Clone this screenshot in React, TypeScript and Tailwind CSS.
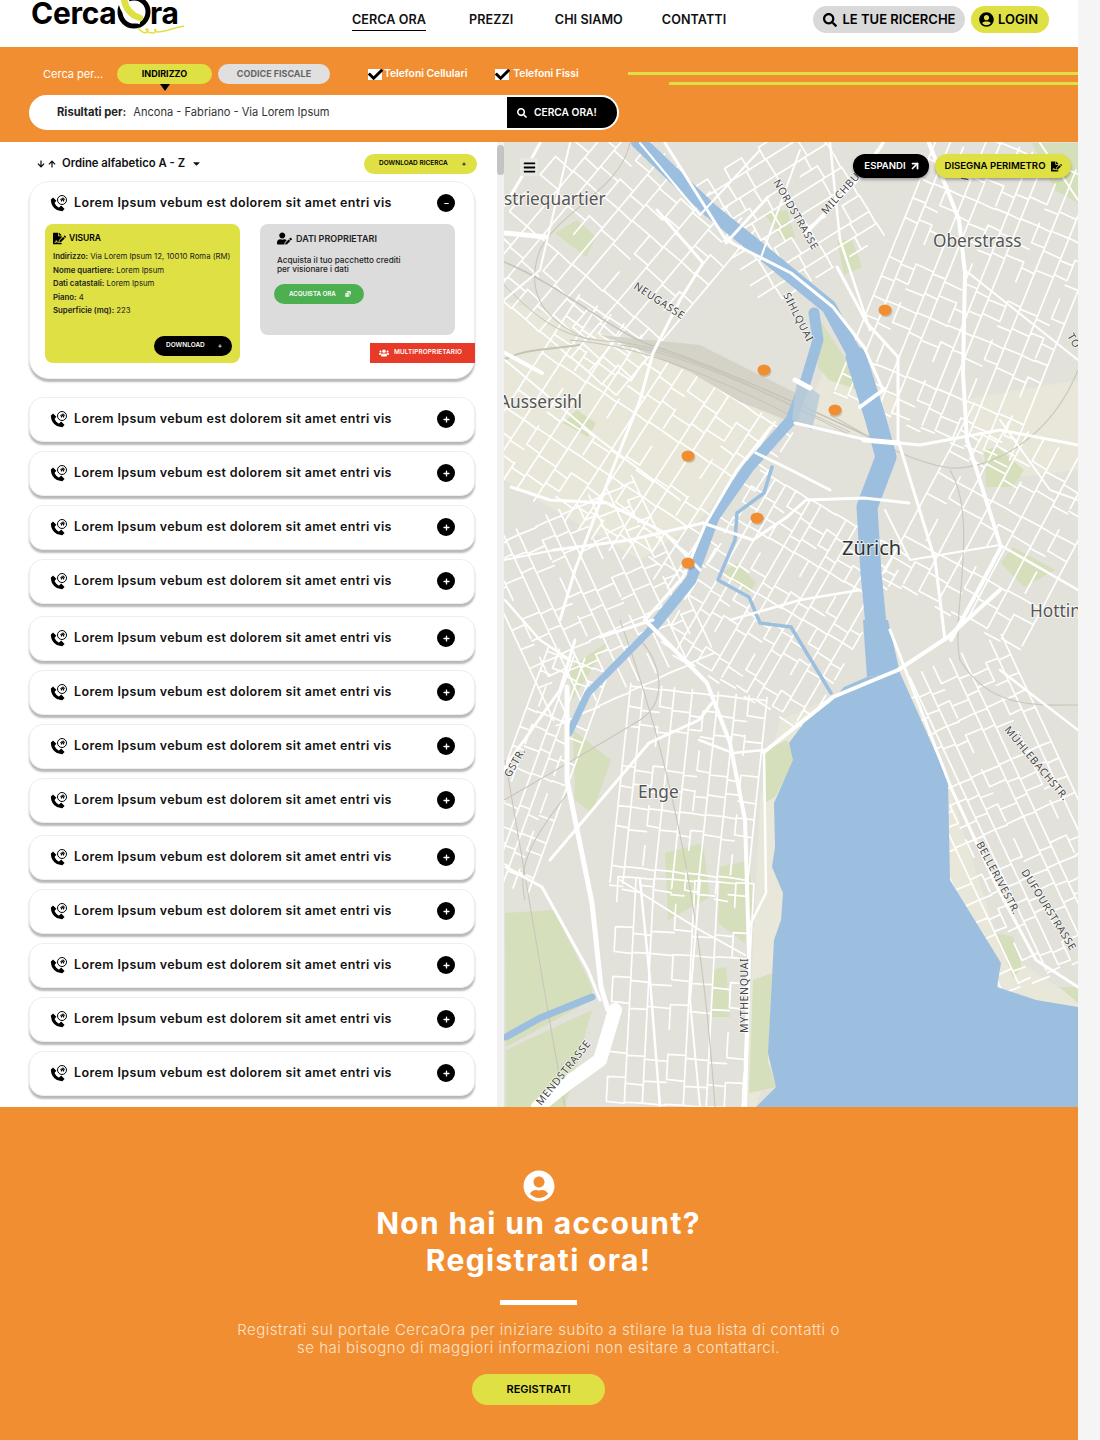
import React from 'react';
import {
  FaArrowDown, FaArrowUp, FaBars, FaCaretDown, FaCheck, FaCoins, FaFileSignature, FaHome, FaMinus,
  FaPlus, FaSearch, FaUserCircle, FaUserEdit, FaUsers,
} from 'react-icons/fa';
import { ArrowUpRight } from 'lucide-react';

const font = { fontFamily: 'Inter, "Liberation Sans", sans-serif' };

const Logo = () => (
  <div className="relative h-[47px] w-[160px] shrink-0 overflow-hidden">
    <span className="absolute left-0 top-[-5px] text-[30px] leading-[36px] font-bold tracking-[-0.01em] text-black">Cerca</span>
    <svg className="absolute left-[85px] top-0" width="70" height="36" viewBox="0 0 70 36">
      <circle cx="18" cy="12" r="14" fill="none" stroke="#000" strokeWidth="5" />
      <path d="M7 -3 C8 8 14 16 25 19" fill="none" stroke="#fff" strokeWidth="11" />
      <path d="M8 -2 C9 8 15 15 24 18" fill="none" stroke="#dfe044" strokeWidth="6.5" strokeLinecap="round" />
      <path d="M22 28 C27 34 32 34 32 30 C31 27 28 30 32 32 C38 34 40 33 40 30 C39 28 37 31 41 32 C50 32 56 28 68 26" fill="none" stroke="#dfe044" strokeWidth="1.4" />
    </svg>
    <span className="absolute left-[119px] top-[-5px] text-[30px] leading-[36px] font-bold tracking-[-0.01em] text-black">ra</span>
  </div>
);

const PhoneHome = () => (
  <span className="relative block h-[17px] w-[17px] shrink-0">
    <svg className="absolute left-0 top-[2px]" width="15" height="15" viewBox="0 0 15 15">
      <path d="M2.6 2.6 C2 8 7 13.4 12.4 12.4" fill="none" stroke="#000" strokeWidth="3" />
      <path d="M0.6 3 L3 0.4 L6.4 3.8 L4 6.4 Z M8.6 11 L11.2 8.6 L14.6 12 L12 14.6 Z" fill="#000" />
    </svg>
    <span className="absolute right-0 top-0 flex h-[10px] w-[10px] items-center justify-center rounded-full border-[1.5px] border-black bg-white">
      <FaHome className="text-[5px] text-black" />
    </span>
  </span>
);

const RowTitle = () => (
  <span className="text-[12.5px] font-semibold tracking-[0.03em] text-[#111]">Lorem Ipsum vebum est dolorem sit amet entri vis</span>
);

const ResultRow = () => (
  <div className="flex h-[45px] items-center justify-between rounded-[14px] border border-[#eeeeee] bg-white pb-[1px] pl-[20px] pr-[19px] shadow-[0_3px_2px_rgba(0,0,0,0.28)]">
    <div className="flex items-center gap-[7px]">
      <PhoneHome />
      <RowTitle />
    </div>
    <span className="flex h-[18px] w-[18px] items-center justify-center rounded-full bg-black">
      <FaPlus className="text-[7px] text-white" />
    </span>
  </div>
);

const OpenCard = () => (
  <div className="relative h-[198px] rounded-[20px] border border-[#eeeeee] bg-white shadow-[0_3px_2px_rgba(0,0,0,0.28)]">
    <div className="flex h-[42px] items-center justify-between pl-[20px] pr-[19px]">
      <div className="flex items-center gap-[7px]">
        <PhoneHome />
        <RowTitle />
      </div>
      <span className="flex h-[18px] w-[18px] items-center justify-center rounded-full bg-black">
        <FaMinus className="text-[5px] text-white" />
      </span>
    </div>
    <div className="flex items-start gap-[20px] pl-[15px]">
      <div className="relative h-[139px] w-[195px] rounded-[8px] bg-[#dfe044] px-[8px] pt-[8px] text-[#222]">
        <div className="flex items-center gap-[3px]">
          <FaFileSignature className="text-[13px] text-black" />
          <span className="text-[8.5px] font-semibold text-black">VISURA</span>
        </div>
        <div className="mt-[7px] flex flex-col gap-[4.5px] text-[7.8px] leading-[9px]">
          <p><b className="font-semibold">Indirizzo:</b> Via Lorem Ipsum 12, 10010 Roma (RM)</p>
          <p><b className="font-semibold">Nome quartiere:</b> Lorem Ipsum</p>
          <p><b className="font-semibold">Dati catastali:</b> Lorem Ipsum</p>
          <p><b className="font-semibold">Piano:</b> 4</p>
          <p><b className="font-semibold">Superficie (mq):</b> 223</p>
        </div>
        <div className="absolute bottom-[7px] right-[8px] flex h-[20px] w-[78px] items-center justify-between rounded-full bg-black pl-[12px] pr-[10px] text-white">
          <span className="text-[6.5px] font-semibold">DOWNLOAD</span>
          <FaPlus className="text-[4px]" />
        </div>
      </div>
      <div className="h-[111px] w-[195px] rounded-[8px] bg-[#dcdcdc] pl-[17px] pt-[7px] text-[#222]">
        <div className="flex items-center gap-[4px]">
          <FaUserEdit className="text-[15px] text-black" />
          <span className="text-[9px] font-semibold">DATI PROPRIETARI</span>
        </div>
        <p className="mt-[10px] text-[8.2px] leading-[9px] font-medium">Acquista il tuo pacchetto crediti<br />per visionare i dati</p>
        <div className="-ml-[3px] mt-[10px] flex h-[20px] w-[90px] items-center justify-between rounded-full bg-[#4caf50] pl-[15px] pr-[13px] text-white">
          <span className="text-[6.2px] font-semibold">ACQUISTA ORA</span>
          <FaCoins className="text-[6px]" />
        </div>
      </div>
    </div>
    <div className="absolute bottom-[15px] right-[-1px] flex h-[20px] w-[105px] items-center gap-[5px] bg-[#e83a28] pl-[9px] text-white">
      <FaUsers className="text-[10px]" />
      <span className="text-[6.4px] font-semibold tracking-[0.02em]">MULTIPROPRIETARIO</span>
    </div>
  </div>
);

const districts = [
  { x: 505, y: 143, w: 210, h: 230, a: 40, sx: 20, sy: 24 },
  { x: 505, y: 350, w: 260, h: 200, a: 33, sx: 18, sy: 22 },
  { x: 505, y: 500, w: 190, h: 190, a: -25, sx: 16, sy: 21 },
  { x: 710, y: 143, w: 150, h: 150, a: 58, sx: 16, sy: 20 },
  { x: 880, y: 143, w: 200, h: 300, a: 22, sx: 16, sy: 21 },
  { x: 920, y: 430, w: 160, h: 200, a: 28, sx: 19, sy: 24 },
  { x: 700, y: 500, w: 170, h: 200, a: 30, sx: 14, sy: 18 },
  { x: 620, y: 690, w: 140, h: 200, a: 6, sx: 15, sy: 20 },
  { x: 505, y: 650, w: 70, h: 240, a: 20, sx: 13, sy: 20 },
  { x: 610, y: 880, w: 140, h: 230, a: 3, sx: 20, sy: 25 },
  { x: 930, y: 650, w: 150, h: 330, a: -25, sx: 15, sy: 19 },
];

// street grid per district, jittered and with some segments left out so blocks are not too regular
const gridPath = (d: (typeof districts)[number], seed: number) => {
  let path = '';
  const nx = Math.floor(d.w / d.sx);
  const ny = Math.floor(d.h / d.sy);
  const colX = (i: number) => d.x + i * d.sx + ((i * 13 + seed) % 5) - 2;
  for (let i = 0; i <= nx; i++) {
    for (let j = 0; j < ny; j++) {
      if ((i * 7 + j * 3 + seed) % 6 === 0) continue;
      path += `M${colX(i)} ${d.y + j * d.sy}V${d.y + (j + 1) * d.sy}`;
    }
  }
  for (let j = 0; j <= ny; j++) {
    for (let i = 0; i < nx; i++) {
      if ((i * 5 + j * 11 + seed) % 5 === 0) continue;
      const yy = d.y + j * d.sy + ((i * j + seed) % 3) * 3;
      path += `M${colX(i)} ${yy}L${colX(i + 1)} ${yy + ((i + j) % 2)}`;
    }
  }
  return path;
};

const parks = [
  '555,233 577,220 596,237 586,257', '563,423 577,410 596,423 588,437', '764,213 787,210 795,237 783,240',
  '837,240 852,240 862,267 844,275', '818,317 844,357 858,390 829,380 818,367', '984,450 997,447 1024,470 1013,487 986,487',
  '1001,563 1013,547 1055,570 1024,587', '722,573 737,563 756,583 749,593', '1032,143 1078,143 1078,203 1055,190',
  '573,730 611,760 592,813 575,800', '665,853 703,843 710,897 668,920', '720,867 749,860 753,907 745,943 718,923',
  '764,750 787,740 795,760 775,797 764,803', '505,913 554,910 592,987 592,1000 506,1047', '506,1050 592,1010 565,1107 506,1107',
  '753,980 772,973 768,1063 776,1087 749,1093', '712,970 726,967 730,1017 712,1017', '996,933 1013,937 1022,967 1013,978',
  '1059,987 1078,987 1078,1003', '570,668 610,640 585,680 572,700',
];

const beige = [
  '504,300 660,350 780,420 700,520 640,560 504,480',
  '890,630 950,790 1001,950 1078,1000 1078,1020 1000,990 950,880 900,673',
  '780,720 850,690 900,673 900,700 800,800 790,1000 756,1107 745,1107 760,800',
  '830,360 900,400 880,440 800,420', '960,400 1078,380 1078,470 990,480',
];

const lake = '900,673 948,780 950,880 1001,963 997,987 1036,1000 1078,1007 1078,1107 756,1107 776,1087 768,1053 774,940 781,920 783,893 772,867 775,847 774,803 793,760 789,743 804,723 833,700 844,687 867,677';

const mainRoads: [string, number][] = [
  ['703,263 680,300 653,353 640,400 611,473 575,570 560,620', 3],
  ['726,243 768,197', 3], ['806,233 860,177 883,143', 3.5],
  ['665,143 726,240 791,273 833,307 864,347 883,390', 3],
  ['883,390 860,407', 4], ['929,143 959,220 965,273 963,373 967,440 986,500 1001,547 982,583 951,640', 4],
  ['837,267 867,323 898,357 898,440 935,560 945,640', 3], ['795,380 810,388', 5], ['795,423 867,440 920,445 1000,430 1078,445', 3],
  ['864,440 898,443', 5], ['756,453 791,470 830,490', 3], ['703,523 753,540 787,517 806,500 864,498 909,503', 3],
  ['511,487 550,500 607,503 665,533 700,570', 3], ['554,550 630,540 703,523', 3], ['504,560 554,550', 2],
  ['645,620 683,577 706,523 737,470 771,427', 3], ['645,620 707,683 730,743 745,820 749,953 745,1107', 4],
  ['764,750 766,893 749,927', 2.5], ['567,687 567,780 592,903 601,987 608,1010', 5], ['615,1010 600,1060 565,1085 538,1107', 14],
  ['550,860 649,743 699,720 712,703', 3], ['764,752 833,697 898,670 948,637 1000,590', 4],
  ['890,630 952,790 997,887 1036,960 1078,987', 3], ['699,740 733,753 764,750', 2.5], ['506,867 542,887 588,970 600,1000', 3],
  ['505,233 546,237', 5], ['505,353 542,373', 4], ['504,300 540,270 570,143', 2], ['540,143 520,180 505,205', 3],
  ['657,210 703,263', 3], ['640,143 700,215 760,150', 2], ['575,640 560,690 510,760 505,770', 3], ['600,637 653,620', 3],
  ['730,620 800,600 860,590', 2.5], ['505,600 540,640 570,660', 2.5], ['885,510 910,560 1000,545', 2],
  ['965,270 1078,360', 2], ['1000,420 1050,490 1078,500', 2], ['1000,545 1078,590', 2.5], ['1000,670 1078,730', 2.5],
  ['760,260 800,150', 2], ['830,143 840,240 870,330', 2.5], ['1040,143 1078,200', 2], ['620,880 700,930 745,955', 2],
  ['505,360 600,440 680,500', 2], ['660,1107 650,980 640,880', 2.5], ['700,1107 690,1000 700,880', 2],
];

const railCurves = [
  'M630 143 C620 190 560 210 540 250 C525 290 540 320 590 340',
  'M1078 370 C1050 440 990 470 950 468 C900 460 860 430 830 415',
  'M950 470 C980 520 950 620 960 660 C990 710 1040 705 1078 705',
  'M504 800 C540 780 590 750 640 720 C670 700 660 660 640 640',
  'M620 620 C660 730 700 880 715 1107', 'M505 760 C530 900 545 1000 565 1107', 'M570 790 C540 830 515 860 525 900',
];

const labelCls = 'fill-[#555] text-[17.3px]';

const MapCanvas = () => (
  <svg className="block h-full w-full" viewBox="504 142 574 965" style={{ fontFamily: '"Noto Sans", "Open Sans", sans-serif' }}>
    <rect x="504" y="142" width="574" height="965" fill="#e2e1da" />
    {beige.map((p) => <polygon key={p} points={p} fill="#e8e7da" />)}
    {parks.map((p) => <polygon key={p} points={p} fill="#d6dfbb" />)}
    <g fill="none" stroke="#ffffff" strokeWidth="1.7" strokeLinecap="round">
      {districts.map((d, i) => (
        <path key={i} d={gridPath(d, i)} transform={`rotate(${d.a} ${d.x + d.w / 2} ${d.y + d.h / 2})`} />
      ))}
    </g>
    <polygon points="600,335 700,345 800,395 800,425 740,402 690,372 640,350" fill="#d5d2c8" />
    <g fill="none" stroke="#c9c6bc" strokeWidth="1.1">
      {railCurves.map((d) => <path key={d} d={d} />)}
    </g>
    <g fill="none" stroke="#c6c3b8" strokeWidth="1">
      <path d="M504 262 C560 285 610 330 650 345 C700 360 780 395 880 442" strokeWidth="1.5" />
      <path d="M504 285 C540 320 560 340 620 342 C690 352 770 395 860 440" />
      <path d="M570 340 C630 345 690 365 790 415" />
      <path d="M620 345 C680 352 760 390 850 432" />
      <path d="M504 360 C520 350 540 350 580 345" strokeWidth="2" />
    </g>
    <g fill="none" stroke="#9dbfdf" strokeLinejoin="round" strokeLinecap="round">
      <path d="M638 141 L710 210 L768 257 L829 307 L856 357" strokeWidth="15" />
      <path d="M856 357 L875 417 L886 457 L867 507 L871 573 L876 625" strokeWidth="21" />
      <path d="M653 627 L691 580 L714 517 L749 467 L791 420 L806 380 L818 340 L814 313" strokeWidth="11" />
      <path d="M653 627 L588 693 L569 733" strokeWidth="7" />
      <path d="M772 467 L764 493 L737 513 L735 540 L718 580 L749 597 L760 623 L791 627 L831 693" strokeWidth="3.5" />
      <path d="M592 997 L540 1018 L506 1037" strokeWidth="7" />
    </g>
    <polygon points="863,620 888,620 900,673 867,677" fill="#9dbfdf" />
    <polygon points={lake} fill="#9dbfdf" />
    <ellipse cx="746" cy="1069" rx="3" ry="7" fill="#e8e7da" />
    <polygon points="820,395 797,378 792,420 812,430" fill="#b9cbd8" opacity="0.85" />
    <g fill="none" stroke="#ffffff" strokeLinecap="round" strokeLinejoin="round">
      {mainRoads.map(([p, w]) => <polyline key={p} points={p} strokeWidth={w} />)}
    </g>
    <g className="fill-[#555]" style={{ paintOrder: 'stroke' }} stroke="#ffffff" strokeWidth="2" strokeOpacity="0.7">
      <text x="504" y="205" className={labelCls}>striequartier</text>
      <text x="933" y="247" className={labelCls}>Oberstrass</text>
      <text x="499" y="408" className={labelCls}>Aussersihl</text>
      <text x="842" y="555" className="fill-[#333] text-[20px]">Zürich</text>
      <text x="1030" y="617" className={labelCls}>Hottin</text>
      <text x="638" y="798" className={labelCls}>Enge</text>
    </g>
    <g className="fill-[#444] text-[10.5px] tracking-[0.06em]" style={{ paintOrder: 'stroke' }} stroke="#ffffff" strokeWidth="1.5" strokeOpacity="0.8">
      <text transform="translate(773 182) rotate(60)">NORDSTRASSE</text>
      <text transform="translate(826 215) rotate(-48)">MILCHBUCK</text>
      <text transform="translate(633 288) rotate(33)">NEUGASSE</text>
      <text transform="translate(783 295) rotate(63)">SIHLQUAI</text>
      <text transform="translate(1067 336) rotate(60)">TO</text>
      <text transform="translate(510 778) rotate(-60)">GSTR.</text>
      <text transform="translate(1004 730) rotate(50)">MÜHLEBACHSTR.</text>
      <text transform="translate(976 844) rotate(62)">BELLERIVESTR.</text>
      <text transform="translate(1021 872) rotate(58)">DUFOURSTRASSE</text>
      <text transform="translate(748 1033) rotate(-90)">MYTHENQUAI</text>
      <text transform="translate(541 1106) rotate(-51)">MENDSTRASSE</text>
      <text transform="translate(968 181) rotate(-80)">FB</text>
    </g>
    {[[885, 310], [764, 370], [835, 410], [688, 456], [757, 518], [688, 563]].map(([cx, cy]) => (
      <g key={cy}>
        <ellipse cx={cx + 1} cy={cy + 1.5} rx="6.5" ry="5.5" fill="#000" opacity="0.15" />
        <ellipse cx={cx} cy={cy} rx="6.5" ry="5.5" fill="#f28e32" />
      </g>
    ))}
  </svg>
);

export default function App() {
  return (
    <div className="h-[1440px] w-[1100px] overflow-hidden bg-[#f5f5f5] text-black" style={font}>
      <div className="w-[1078px]">
        <header className="flex h-[47px] items-start bg-white pl-[31px]">
          <Logo />
          <nav className="ml-[161px] mt-[11px] flex items-center text-[12.6px] leading-[18px] font-semibold tracking-[0.005em] text-[#111]">
            <span className="relative h-[18px] after:absolute after:bottom-[-2px] after:left-0 after:h-[1px] after:w-full after:bg-black">CERCA ORA</span>
            <span className="ml-[43px]">PREZZI</span>
            <span className="ml-[41.5px]">CHI SIAMO</span>
            <span className="ml-[39px]">CONTATTI</span>
          </nav>
          <div className="ml-auto mr-[29px] mt-[6px] flex items-center gap-[6px] text-[13px] font-semibold">
            <div className="flex h-[27px] w-[152px] items-center justify-center gap-[6px] rounded-full bg-[#d9d9d9]">
              <FaSearch className="text-[14px]" />
              <span>LE TUE RICERCHE</span>
            </div>
            <div className="flex h-[27px] w-[78px] items-center justify-center gap-[4px] rounded-full bg-[#dfe044] pr-[3px]">
              <FaUserCircle className="text-[15px]" />
              <span>LOGIN</span>
            </div>
          </div>
        </header>

        <section className="relative h-[95px] bg-[#f28e32] pl-[29px] pt-[17px]">
          <div className="flex h-[20px] items-center">
            <span className="ml-[14px] w-[74px] text-[11px] text-white">Cerca per...</span>
            <div className="relative flex h-[20px] w-[95px] items-center justify-center rounded-full bg-[#dfe044] text-[9px] font-bold text-black">
              INDIRIZZO
              <span className="absolute left-[43px] top-[20px] h-0 w-0 border-x-[5px] border-t-[7px] border-x-transparent border-t-black" />
            </div>
            <div className="ml-[6px] flex h-[20px] w-[112px] items-center justify-center rounded-full bg-[#e0e0e0] text-[9px] font-bold text-[#666]">CODICE FISCALE</div>
            <div className="ml-[38px] flex items-center gap-[2px] text-[10.3px] font-semibold text-white">
              <span className="relative h-[11px] w-[14px] bg-white"><FaCheck className="absolute left-0 top-[-2px] text-[15px] text-black" /></span>
              Telefoni Cellulari
            </div>
            <div className="ml-[28px] flex items-center gap-[4px] text-[10.3px] font-semibold text-white">
              <span className="relative h-[11px] w-[14px] bg-white"><FaCheck className="absolute left-0 top-[-2px] text-[15px] text-black" /></span>
              Telefoni Fissi
            </div>
          </div>
          <div className="absolute right-0 top-[25px] h-[3px] w-[450px] bg-[#dfe044]" />
          <div className="absolute right-0 top-[35px] h-[3px] w-[409px] bg-[#dfe044]" />
          <div className="mt-[11px] flex h-[35px] w-[590px] items-center overflow-hidden rounded-full border-[2.5px] border-white bg-white pl-[26px]">
            <span className="text-[11.2px] font-bold text-[#222]">Risultati per:</span>
            <span className="ml-[7px] text-[11.1px] text-[#333]">Ancona - Fabriano - Via Lorem Ipsum</span>
            <div className="ml-auto flex h-full w-[110px] items-center gap-[7px] bg-black pl-[10px] text-[10.2px] font-semibold text-white">
              <FaSearch className="text-[10px]" />
              CERCA ORA!
            </div>
          </div>
        </section>

        <main className="flex h-[965px] overflow-hidden">
          <div className="w-[497px] bg-white pl-[29px] pr-[22px]">
            <div className="-mr-[2px] flex h-[39px] items-center justify-between pt-[4px]">
              <div className="ml-[8px] flex items-center text-[11.3px] font-semibold text-[#111]">
                <FaArrowDown className="text-[8px]" />
                <FaArrowUp className="ml-[3px] text-[8px]" />
                <span className="ml-[6px]">Ordine alfabetico A - Z</span>
                <FaCaretDown className="ml-[6px] text-[11px]" />
              </div>
              <div className="flex h-[20px] w-[113px] items-center justify-between rounded-full bg-[#dfe044] pl-[15px] pr-[11px]">
                <span className="text-[6.5px] font-semibold">DOWNLOAD RICERCA</span>
                <FaPlus className="text-[4px]" />
              </div>
            </div>
            <OpenCard />
            <div className="mt-[18px] flex flex-col gap-[12px]">
              {[4, 4, 5].map((count, g) => (
                <div key={g} className="flex flex-col gap-[9px]">
                  {Array.from({ length: count }).map((_, i) => <ResultRow key={i} />)}
                </div>
              ))}
            </div>
          </div>
          <div className="relative w-[7px] bg-[#f1f1f1]">
            <div className="absolute left-0 top-[3px] h-[30px] w-[7px] rounded-full bg-[#c4c4c4]" />
          </div>
          <div className="relative w-[574px]">
            <MapCanvas />
            <div className="absolute left-[16px] top-[16px] flex h-[18px] w-[18px] items-center justify-center bg-[#e8e8e4]">
              <FaBars className="text-[13px] text-black" />
            </div>
            <div className="absolute right-[7px] top-[12px] flex items-center gap-[6px] text-[9.6px] font-semibold">
              <div className="flex h-[24px] w-[76px] items-center justify-center gap-[3px] rounded-full bg-black pl-[3px] text-white shadow-[0_2px_3px_rgba(0,0,0,0.3)]">
                ESPANDI <ArrowUpRight size={12} strokeWidth={3.5} />
              </div>
              <div className="flex h-[24px] w-[136px] items-center justify-center gap-[5px] rounded-full bg-[#dfe044] shadow-[0_2px_3px_rgba(0,0,0,0.3)]">
                DISEGNA PERIMETRO <FaFileSignature className="text-[11px]" />
              </div>
            </div>
          </div>
        </main>

        <footer className="flex h-[333px] flex-col items-center bg-[#f28e32] pr-[1px] pt-[63px] text-center text-white">
          <FaUserCircle className="text-[32px]" />
          <h2 className="mt-[3px] text-[30px] leading-[36.5px] font-bold tracking-[0.045em]">Non hai un account?<br />Registrati ora!</h2>
          <div className="mt-[22px] h-[5px] w-[77px] bg-white" />
          <p className="mt-[16px] text-[15px] leading-[18px] font-light tracking-[0.035em] text-[#fbe3cb]">
            Registrati sul portale CercaOra per iniziare subito a stilare la tua lista di contatti o<br />se hai bisogno di maggiori informazioni non esitare a contattarci.
          </p>
          <div className="mt-[17px] flex h-[31px] w-[133px] items-center justify-center rounded-full bg-[#dfe044] text-[11px] font-semibold text-black">REGISTRATI</div>
        </footer>
      </div>
    </div>
  );
}
